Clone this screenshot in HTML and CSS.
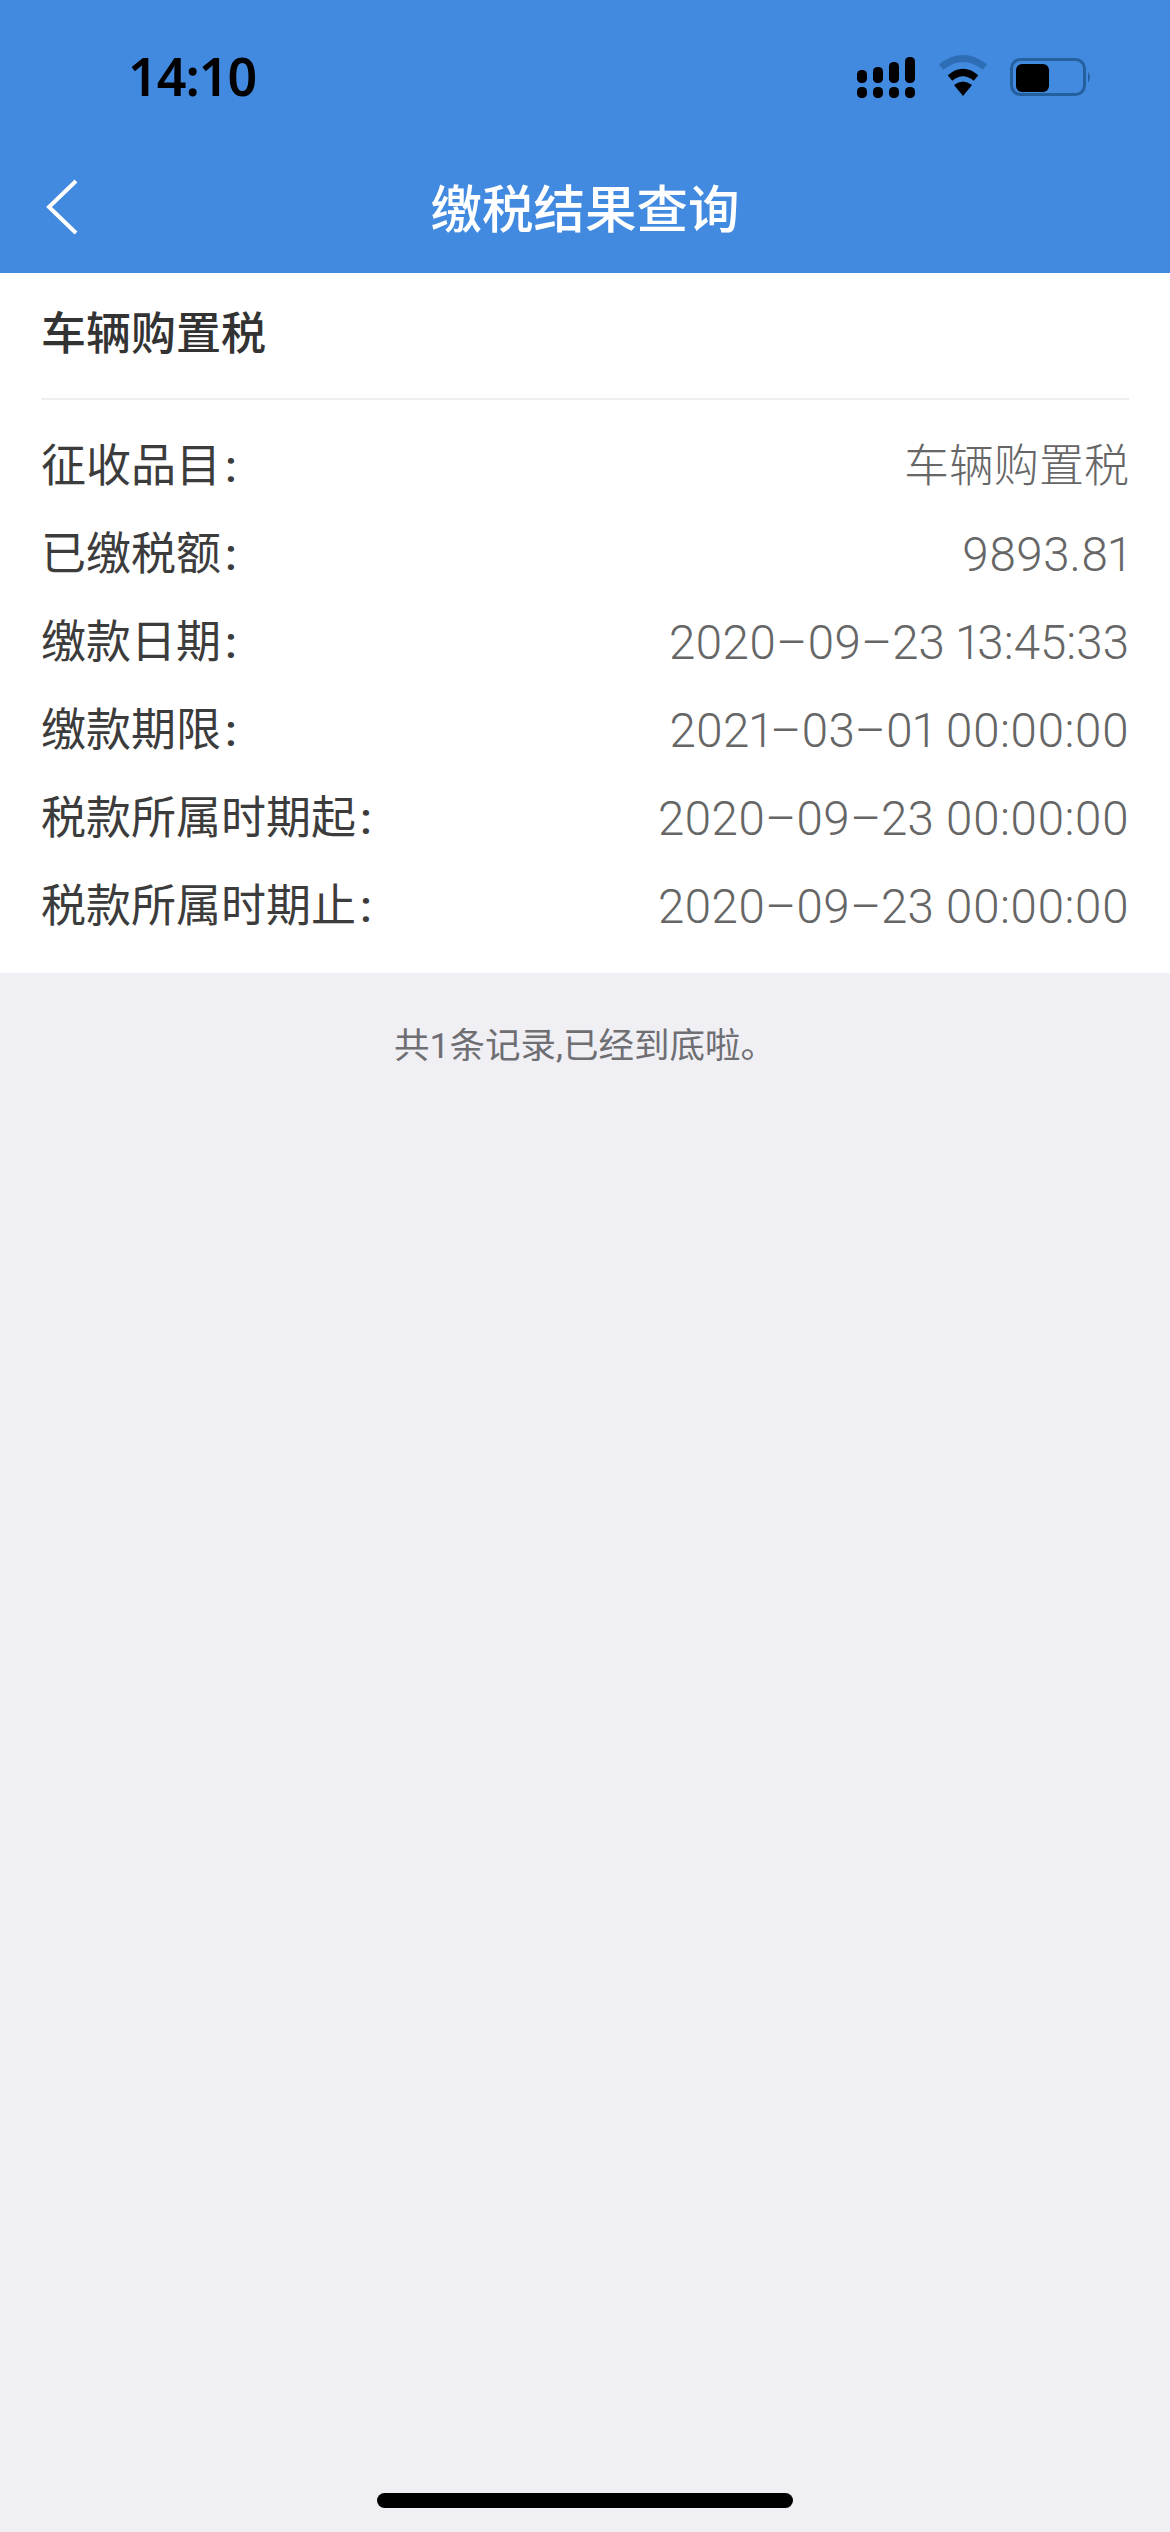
FILE: index.html
```html
<!DOCTYPE html>
<html lang="zh-CN">

<head>
    <meta charset="UTF-8">
    <meta name="viewport" content="width=device-width, initial-scale=1.0">
    <title>缴税结果查询</title>
    <link rel="stylesheet" href="styles.css">
</head>

<body>
    <div class="page">
        <!-- 顶部蓝色区域 -->
        <header class="header">
            <div class="status-bar">
                <span class="time">14:10</span>
                <svg class="status-icons" width="242" height="50" viewBox="0 2 242 50">
                    <!-- 信号 -->
                    <g fill="#000">
                        <rect x="0" y="19" width="10" height="13" rx="4.5" />
                        <rect x="16" y="16" width="10" height="16" rx="4.5" />
                        <rect x="32" y="11" width="10" height="21" rx="4.5" />
                        <rect x="48" y="6" width="10" height="26" rx="4.5" />
                        <rect x="0" y="36" width="10" height="11" rx="4.5" />
                        <rect x="16" y="36" width="10" height="11" rx="4.5" />
                        <rect x="32" y="36" width="10" height="11" rx="4.5" />
                        <rect x="48" y="36" width="10" height="11" rx="4.5" />
                    </g>
                    <!-- wifi -->
                    <path d="M84 16 Q106 -1 128 16" fill="none" stroke="#2d6db5" stroke-width="7" />
                    <path d="M93 27 Q106 16 119 27" fill="none" stroke="#000" stroke-width="7" />
                    <path d="M97 34 Q106 27 115 34 L106 45 Z" fill="#000" />
                    <!-- 电池 -->
                    <rect x="154.5" y="8.5" width="73" height="35" rx="9" fill="none" stroke="#24609f" stroke-width="3" />
                    <rect x="159" y="13" width="33" height="28" rx="6" fill="#000" />
                    <path d="M231 21 Q235 26 231 32 Z" fill="#24609f" />
                </svg>
            </div>
            <div class="nav-bar">
                <svg class="back-icon" width="34" height="58" viewBox="0 0 34 58">
                    <path d="M31 3 L4 29 L31 55" fill="none" stroke="#fff" stroke-width="4" />
                </svg>
                <h1 class="nav-title">缴税结果查询</h1>
            </div>
        </header>

        <!-- 结果卡片 -->
        <section class="card">
            <h2 class="card-title">车辆购置税</h2>
            <ul class="info-list">
                <li class="info-row"><span class="info-label">征收品目<span class="colon">:</span></span><span class="info-value info-value-text">车辆购置税</span></li>
                <li class="info-row"><span class="info-label">已缴税额<span class="colon">:</span></span><span class="info-value">9893.81</span></li>
                <li class="info-row"><span class="info-label">缴款日期<span class="colon">:</span></span><span class="info-value">2020–09–23 13:45:33</span></li>
                <li class="info-row"><span class="info-label">缴款期限<span class="colon">:</span></span><span class="info-value">2021–03–01 00:00:00</span></li>
                <li class="info-row"><span class="info-label">税款所属时期起<span class="colon">:</span></span><span class="info-value">2020–09–23 00:00:00</span></li>
                <li class="info-row"><span class="info-label">税款所属时期止<span class="colon">:</span></span><span class="info-value">2020–09–23 00:00:00</span></li>
            </ul>
        </section>

        <p class="list-end">共1条记录,已经到底啦。</p>

        <div class="home-bar"></div>
    </div>
</body>

</html>
```
FILE: styles.css
```css
* {
    margin: 0;
    padding: 0;
    box-sizing: border-box;
}

body {
    background-color: #efeff4;
    font-family: "Roboto", "Noto Sans CJK SC", sans-serif;
}

.page {
    display: flex;
    flex-direction: column;
    height: 2532px;
}

.header {
    height: 273px;
    background-color: #428ae0;
}

.status-bar {
    display: flex;
    justify-content: space-between;
    align-items: center;
    height: 156px;
    padding: 0 71px 0 128px;
}

.time {
    margin-bottom: 6px;
    font-family: "Noto Sans", sans-serif;
    font-size: 52px;
    font-weight: 600;
    letter-spacing: -1px;
    color: #000;
}

.status-icons {
    display: block;
}

.nav-bar {
    position: relative;
    display: flex;
    justify-content: center;
    align-items: center;
    height: 100px;
    margin-top: -1px;
}

.back-icon {
    position: absolute;
    left: 45px;
    top: 23px;
}

.nav-title {
    font-size: 51.5px;
    font-weight: 500;
    color: #fff;
}

.card {
    height: 700px;
    padding: 0 41px;
    background-color: #fff;
}

.card-title {
    height: 127px;
    line-height: 124px;
    font-size: 45px;
    font-weight: 500;
    color: #333;
    border-bottom: 2px solid #eee;
}

.info-list {
    list-style: none;
    padding-top: 18px;
}

.info-row {
    display: flex;
    justify-content: space-between;
    align-items: center;
    height: 88px;
    font-size: 45px;
}

.info-label {
    color: #3c3c3c;
}

.colon {
    margin-left: 4px;
    font-weight: 500;
}

.info-value {
    padding-top: 9px;
    font-size: 47.5px;
    font-weight: 300;
    font-variant-numeric: proportional-nums;
    color: #666;
}

.info-value-text {
    padding-top: 0;
    font-size: 45px;
}

.list-end {
    margin-top: 48px;
    font-size: 35.5px;
    line-height: 50px;
    text-align: center;
    color: #6e6e73;
}

.home-bar {
    width: 416px;
    height: 15px;
    margin: auto auto 24px;
    border-radius: 8px;
    background-color: #000;
}
```
